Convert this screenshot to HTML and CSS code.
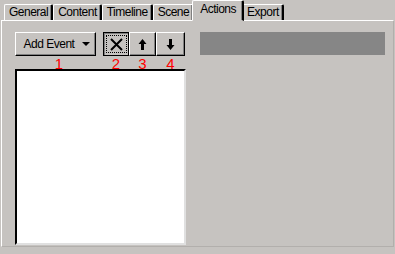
FILE: index.html
```html
<!DOCTYPE html>
<html>
<head>
<meta charset="utf-8">
<link rel="stylesheet" href="styles.css">
</head>
<body>
<div class="window">
  <div class="tabs">
    <div class="tab">General</div>
    <div class="tab">Content</div>
    <div class="tab">Timeline</div>
    <div class="tab">Scene</div>
    <div class="tab active">Actions</div>
    <div class="tab">Export</div>
  </div>
  <div class="panel">
    <div class="left">
      <div class="toolbar">
        <div class="btnwrap">
          <button class="btn add">Add Event <span class="caret"></span></button>
          <span class="num">1</span>
        </div>
        <div class="btnwrap">
          <button class="btn icon pressed">
            <span class="focus">
              <svg width="15" height="13" viewBox="0 0 15 13"><path d="M2 1 L13 12 M13 1 L2 12" stroke="#000" stroke-width="2"/></svg>
            </span>
          </button>
          <span class="num">2</span>
        </div>
        <div class="btnwrap">
          <button class="btn icon">
            <svg width="9" height="13" viewBox="0 0 9 13"><path d="M4.5 1 L8.5 6 L6 6 L6 12 L3 12 L3 6 L0.5 6 Z" fill="#000"/></svg>
          </button>
          <span class="num">3</span>
        </div>
        <div class="btnwrap">
          <button class="btn icon wide">
            <svg width="9" height="13" viewBox="0 0 9 13"><path d="M4.5 12 L8.5 7 L6 7 L6 1 L3 1 L3 7 L0.5 7 Z" fill="#000"/></svg>
          </button>
          <span class="num">4</span>
        </div>
      </div>
      <div class="list"></div>
    </div>
    <div class="right">
      <div class="bar"></div>
    </div>
  </div>
</div>
</body>
</html>
```

FILE: styles.css
```css
html, body {
  margin: 0;
  padding: 0;
  background: #c6c3c0;
  width: 395px;
  height: 254px;
  overflow: hidden;
  font-family: "Liberation Sans", Arial, sans-serif;
  font-size: 12px;
  color: #000;
}
.window {
  padding: 1px 1px 0 1px;
}
.tabs {
  display: flex;
  align-items: flex-end;
  height: 19px;
  padding-left: 3px;
  position: relative;
  z-index: 1;
}
.tab {
  height: 15px;
  line-height: 15px;
  padding: 0 3px 0 4px;
  letter-spacing: -0.5px;
  border-top: 1px solid #fff;
  border-left: 1px solid #fff;
  border-right: 2px solid #000;
  border-radius: 2px 2px 0 0;
  box-shadow: inset -1px 0 0 #808080;
  background: #c6c3c0;
}
.tab.active {
  line-height: 16px;
  padding: 0 6px 0 7px;
  margin: 0 -2px -1px -2px;
  border-bottom: 1px solid #c6c3c0;
  height: 19px;
  position: relative;
  z-index: 2;
}
.panel {
  border-top: 1px solid #fff;
  border-left: 1px solid #fff;
  border-right: 1px solid #b2afac;
  border-bottom: 1px solid #b2afac;
  display: flex;
  padding: 11px 0 0 13px;
  box-sizing: border-box;
  height: 227px;
}
.left {
  width: 171px;
  display: flex;
  flex-direction: column;
}
.toolbar {
  display: flex;
}
.btnwrap {
  display: flex;
  flex-direction: column;
  align-items: center;
}
.btn {
  font-family: "Liberation Sans", Arial, sans-serif;
  height: 24px;
  background: #c6c3c0;
  border-top: 1px solid #fff;
  border-left: 1px solid #fff;
  border-right: 1px solid #000;
  border-bottom: 1px solid #000;
  box-shadow: inset -1px -1px 0 #808080;
  padding: 0;
  margin: 0;
  display: flex;
  align-items: center;
  justify-content: center;
  color: #000;
}
.add {
  width: 81px;
  margin-right: 7px;
  padding-left: 3px;
  font-size: 12px;
  letter-spacing: -0.5px;
}
.caret {
  display: inline-block;
  width: 0;
  height: 0;
  border-left: 4px solid transparent;
  border-right: 4px solid transparent;
  border-top: 4px solid #000;
  margin-left: 8px;
}
.icon {
  width: 27px;
}
.icon.wide {
  width: 29px;
}
.pressed {
  border: 1px solid #000;
  box-shadow: inset 1px 1px 0 #808080;
  width: 26px;
}
.focus {
  display: flex;
  align-items: center;
  justify-content: center;
  width: 19px;
  height: 16px;
  border: 1px dotted #000;
}
.num {
  color: #f00;
  font-family: "Liberation Sans", Arial, sans-serif;
  font-size: 15px;
  line-height: 12px;
  height: 12px;
  margin-top: 2px;
}
.list {
  margin-top: -1px;
  width: 171px;
  height: 176px;
  box-sizing: border-box;
  background: #fff;
  border-top: 2px solid #000;
  border-left: 2px solid #000;
  border-right: 2px solid #e0e0e0;
  border-bottom: 2px solid #e0e0e0;
}
.right {
  padding-left: 14px;
}
.bar {
  width: 185px;
  height: 23px;
  background: #868686;
}
```
